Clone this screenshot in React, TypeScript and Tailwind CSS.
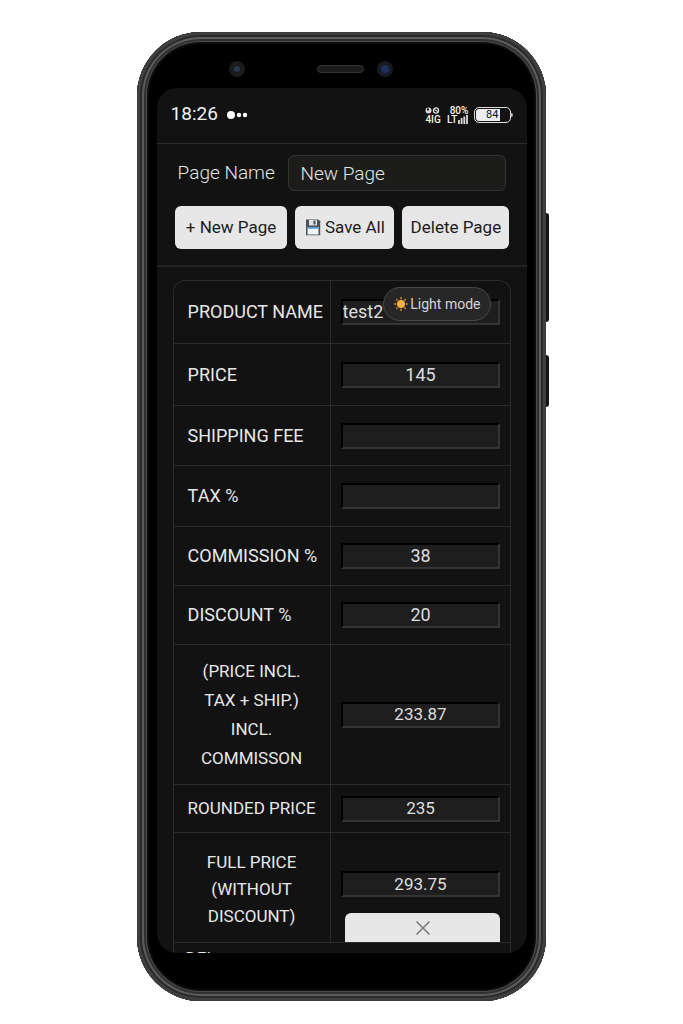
import type { ReactNode } from "react";

type Row = {
    id: string;
    label: ReactNode;
    value: string;
    height: string;
    text: string;
};

const rows: Row[] = [
    { id: "price", label: "PRICE", value: "145", height: "h-[62px]", text: "text-lg" },
    { id: "shipping", label: "SHIPPING FEE", value: "", height: "h-[60px]", text: "text-lg" },
    { id: "tax", label: "TAX %", value: "", height: "h-[61px]", text: "text-lg" },
    { id: "commission", label: "COMMISSION %", value: "38", height: "h-[59px]", text: "text-lg" },
    { id: "discount", label: "DISCOUNT %", value: "20", height: "h-[59px]", text: "text-lg" },
    {
        id: "incl",
        label: <>(PRICE INCL.<br />TAX + SHIP.)<br />INCL.<br />COMMISSON</>,
        value: "233.87",
        height: "h-[140px]",
        text: "text-center text-[17px] leading-[29px]",
    },
    { id: "rounded", label: "ROUNDED PRICE", value: "235", height: "h-[48px]", text: "text-[17px]" },
];

const labelCell = "border-r border-t border-[#2c2c2c] px-3.5 font-normal whitespace-nowrap";
const valueCell = "border-t border-[#2c2c2c] px-2.5";
const field =
    "block h-[26px] w-full border-2 border-t-black border-l-black border-r-[#343434] border-b-[#343434] bg-[#1e1e1e] text-[#dedede]";
const action = "flex h-[43px] items-center justify-center gap-1 rounded-md bg-[#e7e7e7] text-[#1c1c1c] whitespace-nowrap";

function FloppyIcon() {
    return (
        <svg width="16" height="17" viewBox="0 0 16 17" aria-hidden="true">
            <path d="M1 .5h12.5l1.7 1.7v14H1z" fill="#4b4f55" />
            <path d="M4 1h8v5.5H4z" fill="#dfe3e8" />
            <path d="M8.500 1.500h2v4h-2z" fill="#4b4f55" />
            <path d="M2.500 8h11v7.500h-11z" fill="#eef6fc" />
            <path d="M2.500 8h11v1.700h-11z" fill="#579bd5" />
        </svg>
    );
}

function SunIcon() {
    return (
        <svg width="14" height="14" viewBox="0 0 14 14" aria-hidden="true">
            <circle cx="7" cy="7" r="4" fill="#f5b043" />
            <path
                d="M7 .3v1.900M7 11.800v1.900M.3 7h1.900M11.800 7h1.900M2.300 2.300l1.200 1.200M10.500 10.500l1.200 1.200M2.300 11.700l1.200-1.200M10.500 3.500l1.200-1.200"
                stroke="#e39a35"
                strokeWidth="1.400"
            />
        </svg>
    );
}

function StatusBar() {
    return (
        <div className="flex h-14 items-center border-b border-[#2c2c2c] px-3.5 pb-0.5 text-[#f4f4f4]">
            <span className="text-[19px]">18:26</span>
            <svg className="ml-2" width="22" height="10" viewBox="0 0 22 10" fill="#fff" aria-hidden="true">
                <circle cx="5" cy="5" r="4" />
                <circle cx="13" cy="5" r="2.200" />
                <circle cx="19" cy="5" r="2.200" />
            </svg>
            <div className="ml-auto flex w-[43px] flex-col text-[10px] leading-[9px] font-medium">
                <span className="flex items-center justify-between">
                    <svg width="15" height="7" viewBox="0 0 15 7" aria-hidden="true">
                        <circle cx="3.500" cy="3.500" r="3" fill="#ddd" />
                        <path d="M2 1.500h2v2H2z" fill="#111" />
                        <circle cx="11" cy="3.500" r="2.600" fill="none" stroke="#ddd" strokeWidth="1.200" />
                        <path d="M9 2.500l4 2" stroke="#ddd" strokeWidth="1.200" />
                    </svg>
                    80%
                </span>
                <span className="flex items-end justify-between">
                    4IG
                    <span className="flex items-end">
                        LT
                        <svg width="11" height="9" viewBox="0 0 11 9" fill="#ddd" aria-hidden="true">
                            <path d="M1 5h1.800v4H1zM3.700 3h1.800v6H3.700zM6.400 1.500h1.800V9H6.400zM9.100 0h1.800v9H9.100z" />
                        </svg>
                    </span>
                </span>
            </div>
            <div className="ml-1.5 flex items-center">
                <div className="flex h-4 w-[37px] rounded-[5px] border border-[#ddd] p-px">
                    <div className="flex w-6 items-center justify-end rounded-l-[3px] bg-[#eee] pr-0.5 text-[11px] leading-none text-[#111]">
                        84
                    </div>
                </div>
                <div className="h-1 w-0.5 rounded-r bg-[#bbb]" />
            </div>
        </div>
    );
}

export default function App() {
    return (
        <main className="min-h-screen bg-white pt-8 pb-6 font-[Roboto,sans-serif]">
            <div className="relative mx-auto w-3/5 rounded-[64px] bg-black pt-14 pr-[19px] pb-12 pl-5 shadow-[inset_0_0_0_1px_#3c3c3c,inset_0_0_0_3px_#404040,inset_0_0_0_5px_#2a2a2a,inset_0_0_0_7px_#5c5c5c,inset_0_0_0_9px_#303030,inset_0_0_0_10px_#4c4c4c,inset_0_0_0_12px_#0c0c0c]">
                <div className="absolute top-[181px] -right-[3px] h-[109px] w-[3px] rounded-r bg-[#151515]" />
                <div className="absolute top-[323px] -right-[3px] h-[52px] w-[3px] rounded-r bg-[#151515]" />

                {/* Cameras and earpiece */}
                <div className="absolute top-[29px] left-[92px] flex size-4 items-center justify-center rounded-full bg-[#1b1b1b]">
                    <span className="size-1.5 rounded-full bg-[#2c3350]" />
                </div>
                <div className="absolute top-[33px] left-[180px] h-2 w-[47px] rounded-full border border-[#353535] bg-[#1c1c1c]" />
                <div className="absolute top-[29px] left-[240px] flex size-4 items-center justify-center rounded-full bg-[#171a20]">
                    <span className="size-2 rounded-full bg-[#1d2f5c]" />
                </div>

                <div className="relative aspect-[371/865] overflow-hidden rounded-[20px] bg-[#111211]">
                    <StatusBar />

                    <div className="border-b-2 border-[#232323] px-[18px] pt-[11px] pb-4">
                        <div className="flex items-center justify-between px-[3px]">
                            <label htmlFor="page-name" className="text-[19px] font-light text-[#e4e4e4]">Page Name</label>
                            <input
                                id="page-name"
                                defaultValue="New Page"
                                className="h-9 w-[218px] rounded-md border border-[#333] bg-[#1c1c1b] px-[11px] text-[19px] font-light text-[#e4e4e4]"
                            />
                        </div>
                        <div className="mt-[15px] flex gap-2 text-[17px]">
                            <button className={`${action} grow`}>+ New Page</button>
                            <button className={`${action} w-[99px]`}><FloppyIcon />Save All</button>
                            <button className={`${action} w-[107px]`}>Delete Page</button>
                        </div>
                    </div>

                    <div className="mx-4 mt-[13px] rounded-t-xl border border-b-0 border-[#2c2c2c]">
                        <table className="w-full table-fixed border-separate border-spacing-0 leading-[27px] text-[#e8e8e8]">
                            <tbody>
                                <tr className="h-[62px] text-lg">
                                    <th scope="row" className="w-[157px] border-r border-[#2c2c2c] px-3.5 text-left font-normal whitespace-nowrap">
                                        <label htmlFor="name">PRODUCT NAME</label>
                                    </th>
                                    <td className="px-2.5">
                                        <input id="name" defaultValue="test2" className={field} />
                                    </td>
                                </tr>
                                {rows.map((row) => (
                                    <tr key={row.id} className={`${row.height} ${row.text}`}>
                                        <th scope="row" className={row.id === "incl" ? `${labelCell} text-center` : `${labelCell} text-left`}>
                                            <label htmlFor={row.id}>{row.label}</label>
                                        </th>
                                        <td className={valueCell}>
                                            <input id={row.id} defaultValue={row.value} className={`${field} text-center`} />
                                        </td>
                                    </tr>
                                ))}
                                <tr className="h-[110px] text-[17px]">
                                    <th scope="row" className={`${labelCell} pt-1 text-center`}>
                                        <label htmlFor="full">FULL PRICE<br />(WITHOUT<br />DISCOUNT)</label>
                                    </th>
                                    <td className={`${valueCell} align-bottom`}>
                                        <input id="full" defaultValue="293.75" className={`${field} text-center`} />
                                        <button aria-label="Remove product" className="mt-4 ml-auto flex h-[29px] w-[155px] items-center justify-center rounded-t-md bg-[#e7e7e7]">
                                            <svg width="14" height="14" viewBox="0 0 14 14" stroke="#777" strokeWidth="1.500" aria-hidden="true">
                                                <path d="M.5.5l13 13M13.500.5l-13 13" />
                                            </svg>
                                        </button>
                                    </td>
                                </tr>
                                <tr className="text-[17px]">
                                    <th scope="row" colSpan={2} className="border-t border-[#2c2c2c] px-3 pt-0.5 text-left font-normal">DEL</th>
                                </tr>
                            </tbody>
                        </table>
                    </div>

                    <button className="absolute top-[199px] right-9 flex h-[34px] w-[108px] items-center justify-center gap-0.5 rounded-full border border-[#484848] bg-[#272727] text-sm whitespace-nowrap text-[#d5d5d5]">
                        <SunIcon />
                        Light mode
                    </button>
                </div>
            </div>
        </main>
    );
}
